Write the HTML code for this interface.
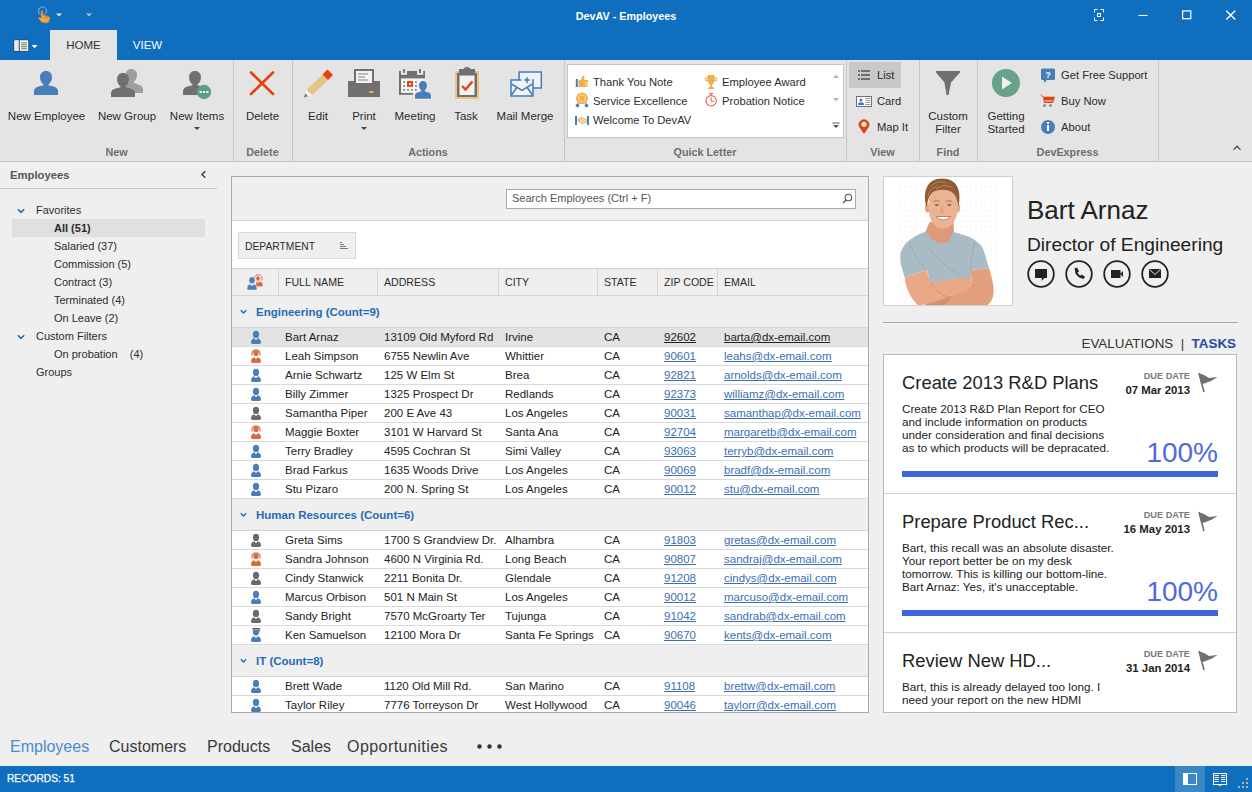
<!DOCTYPE html>
<html><head><meta charset="utf-8">
<style>
*{margin:0;padding:0;box-sizing:border-box}
html,body{width:1252px;height:792px;overflow:hidden;background:#efefef;font-family:"Liberation Sans",sans-serif;color:#222;position:relative}
.a{position:absolute;white-space:nowrap}
#title{left:0;top:0;width:1252px;height:60px;background:#106ebe}
#ribbon{left:0;top:60px;width:1252px;height:102px;background:#e4e4e4;border-bottom:1px solid #c6c6c6}
.sep{position:absolute;top:0;width:1px;height:101px;background:#c6c6c6}
.rb{font-size:11.5px;color:#2c2c2c;text-align:center}
.gl{font-size:10.8px;color:#6e6e6e;font-weight:bold;text-align:center;top:85.5px}
.sm{font-size:11.2px;color:#2c2c2c}
.nav{font-size:11px;color:#2c2c2c}
.hd{font-size:11px;color:#2c2c2c}
.cell{font-size:11.5px;color:#222}
.lnk{color:#3a6fb0;text-decoration:underline}
.grp{font-size:11.5px;color:#1f6cb5;font-weight:bold}
.srch{font-size:11px;color:#555}
.sel{color:#222}
.hl{position:absolute;height:1px;background:#d5d5d5}
.vl{position:absolute;width:1px;background:#d5d5d5}
</style></head><body>

<!-- TITLE BAR + TABS -->
<div id="title" class="a">
  <div class="a" style="left:0;width:1252px;text-align:center;top:10px;font-size:10.8px;font-weight:bold;color:#fff">DevAV - Employees</div>
  <div class="a" style="left:50px;top:30px;width:67px;height:30px;background:#e4e4e4"></div>
  <div class="a" style="left:50px;top:39px;width:67px;text-align:center;font-size:11.5px;color:#333">HOME</div>
  <div class="a" style="left:117px;top:39px;width:61px;text-align:center;font-size:11.5px;color:#fff">VIEW</div>
</div>

<!-- RIBBON -->
<div id="ribbon" class="a">
  <div class="sep" style="left:233px"></div>
  <div class="sep" style="left:292px"></div>
  <div class="sep" style="left:564px"></div>
  <div class="sep" style="left:846px"></div>
  <div class="sep" style="left:919px"></div>
  <div class="sep" style="left:977px"></div>
  <div class="sep" style="left:1158px"></div>

  <div class="a rb" style="left:0;width:93px;top:50px">New Employee</div>
  <div class="a rb" style="left:93px;width:68px;top:50px">New Group</div>
  <div class="a rb" style="left:161px;width:72px;top:50px">New Items</div>
  <div class="a rb" style="left:233px;width:59px;top:50px">Delete</div>
  <div class="a rb" style="left:292px;width:52px;top:50px">Edit</div>
  <div class="a rb" style="left:344px;width:40px;top:50px">Print</div>
  <div class="a rb" style="left:384px;width:62px;top:50px">Meeting</div>
  <div class="a rb" style="left:446px;width:40px;top:50px">Task</div>
  <div class="a rb" style="left:486px;width:78px;top:50px">Mail Merge</div>

  <div class="a gl" style="left:0;width:233px">New</div>
  <div class="a gl" style="left:233px;width:59px">Delete</div>
  <div class="a gl" style="left:292px;width:272px">Actions</div>
  <div class="a gl" style="left:564px;width:282px">Quick Letter</div>
  <div class="a gl" style="left:846px;width:73px">View</div>
  <div class="a gl" style="left:919px;width:58px">Find</div>
  <div class="a gl" style="left:977px;width:181px">DevExpress</div>

  <!-- gallery -->
  <div class="a" style="left:567px;top:4px;width:277px;height:74px;background:#fff;border:1px solid #c6c6c6"></div>
  <div class="a sm" style="left:593px;top:16px">Thank You Note</div>
  <div class="a sm" style="left:593px;top:35px">Service Excellence</div>
  <div class="a sm" style="left:593px;top:54px">Welcome To DevAV</div>
  <div class="a sm" style="left:722px;top:16px">Employee Award</div>
  <div class="a sm" style="left:722px;top:35px">Probation Notice</div>

  <!-- view -->
  <div class="a" style="left:849px;top:2px;width:52px;height:26px;background:#c8c8c8"></div>
  <div class="a sm" style="left:877px;top:9px">List</div>
  <div class="a sm" style="left:877px;top:35px">Card</div>
  <div class="a sm" style="left:877px;top:61px">Map It</div>

  <div class="a rb" style="left:919px;width:58px;top:50px;line-height:13px">Custom<br>Filter</div>
  <div class="a rb" style="left:977px;width:58px;top:50px;line-height:13px">Getting<br>Started</div>
  <div class="a sm" style="left:1061px;top:9px">Get Free Support</div>
  <div class="a sm" style="left:1061px;top:35px">Buy Now</div>
  <div class="a sm" style="left:1061px;top:61px">About</div>
</div>

<!-- LEFT NAV -->
<div class="a" style="left:10px;top:169px;font-size:11.3px;color:#555;font-weight:bold">Employees</div>
<div class="a" style="left:0;top:188px;width:217px;height:1px;background:#c8c8c8"></div>
<div class="a" style="left:12px;top:219px;width:193px;height:18px;background:#e0e0e0"></div>
<div class="a nav" style="left:36px;top:204px">Favorites</div>
<div class="a nav" style="left:54px;top:222px;font-weight:bold">All (51)</div>
<div class="a nav" style="left:54px;top:240px">Salaried (37)</div>
<div class="a nav" style="left:54px;top:258px">Commission (5)</div>
<div class="a nav" style="left:54px;top:276px">Contract (3)</div>
<div class="a nav" style="left:54px;top:294px">Terminated (4)</div>
<div class="a nav" style="left:54px;top:312px">On Leave (2)</div>
<div class="a nav" style="left:36px;top:330px">Custom Filters</div>
<div class="a nav" style="left:54px;top:348px">On probation&nbsp;&nbsp;&nbsp; (4)</div>
<div class="a nav" style="left:36px;top:366px">Groups</div>
<svg class="a" style="left:0;top:160px" width="230" height="230" viewBox="0 160 230 230">
 <path d="M205.3,171.2 L202,174.5 L205.3,177.8" fill="none" stroke="#444" stroke-width="1.6"/>
 <path d="M17.8,209.2 L21,212.4 L24.2,209.2" fill="none" stroke="#1f6cb5" stroke-width="1.6"/>
 <path d="M17.8,335.2 L21,338.4 L24.2,335.2" fill="none" stroke="#1f6cb5" stroke-width="1.6"/>
</svg>

<!-- GRID -->
<div id="grid" class="a" style="left:231px;top:176px;width:638px;height:537px;background:#fff;border:1px solid #a9a9a9;overflow:hidden">
<!--GH-->
<div class="a" style="left:0px;top:0px;width:636px;height:44px;background:#efefef;border-bottom:1px solid #d4d4d4"></div>
<div class="a" style="left:274px;top:12px;width:350px;height:20px;background:#fff;border:1px solid #ababab"></div>
<div class="a srch" style="left:280px;top:15px">Search Employees (Ctrl + F)</div>
<div class="a" style="left:6px;top:55px;width:118px;height:27px;background:#efefef;border:1px solid #d8d8d8"></div>
<div class="a hd" style="left:13px;top:64px;font-size:10.3px">DEPARTMENT</div>
<div class="a" style="left:0px;top:91px;width:636px;height:28px;background:#efefef;border-top:1px solid #d4d4d4;border-bottom:1px solid #d4d4d4"></div>
<div class="a" style="left:46px;top:92px;width:1px;height:26px;background:#d4d4d4"></div>
<div class="a" style="left:145px;top:92px;width:1px;height:26px;background:#d4d4d4"></div>
<div class="a" style="left:266px;top:92px;width:1px;height:26px;background:#d4d4d4"></div>
<div class="a" style="left:365px;top:92px;width:1px;height:26px;background:#d4d4d4"></div>
<div class="a" style="left:425px;top:92px;width:1px;height:26px;background:#d4d4d4"></div>
<div class="a" style="left:485px;top:92px;width:1px;height:26px;background:#d4d4d4"></div>
<div class="a hd" style="left:53px;top:99px;font-size:10.6px">FULL NAME</div>
<div class="a hd" style="left:152px;top:99px;font-size:10.6px">ADDRESS</div>
<div class="a hd" style="left:273px;top:99px;font-size:10.6px">CITY</div>
<div class="a hd" style="left:372px;top:99px;font-size:10.6px">STATE</div>
<div class="a hd" style="left:432px;top:99px;font-size:10.6px">ZIP CODE</div>
<div class="a hd" style="left:492px;top:99px;font-size:10.6px">EMAIL</div>
<div class="a" style="left:0px;top:119px;width:636px;height:32px;background:#efefef;border-bottom:1px solid #d4d4d4"></div>
<div class="a grp" style="left:24px;top:129px">Engineering (Count=9)</div>
<div class="a" style="left:0px;top:151px;width:636px;height:19px;background:#e3e3e3;border-bottom:1px solid #dadada"></div>
<div class="a cell" style="left:53px;top:154px">Bart Arnaz</div>
<div class="a cell" style="left:152px;top:154px">13109 Old Myford Rd</div>
<div class="a cell" style="left:273px;top:154px">Irvine</div>
<div class="a cell" style="left:372px;top:154px">CA</div>
<div class="a cell lnk sel" style="left:432px;top:154px">92602</div>
<div class="a cell lnk sel" style="left:492px;top:154px">barta@dx-email.com</div>
<div class="a" style="left:0px;top:170px;width:636px;height:19px;background:#fff;border-bottom:1px solid #dadada"></div>
<div class="a cell" style="left:53px;top:173px">Leah Simpson</div>
<div class="a cell" style="left:152px;top:173px">6755 Newlin Ave</div>
<div class="a cell" style="left:273px;top:173px">Whittier</div>
<div class="a cell" style="left:372px;top:173px">CA</div>
<div class="a cell lnk" style="left:432px;top:173px">90601</div>
<div class="a cell lnk" style="left:492px;top:173px">leahs@dx-email.com</div>
<div class="a" style="left:0px;top:189px;width:636px;height:19px;background:#fff;border-bottom:1px solid #dadada"></div>
<div class="a cell" style="left:53px;top:192px">Arnie Schwartz</div>
<div class="a cell" style="left:152px;top:192px">125 W Elm St</div>
<div class="a cell" style="left:273px;top:192px">Brea</div>
<div class="a cell" style="left:372px;top:192px">CA</div>
<div class="a cell lnk" style="left:432px;top:192px">92821</div>
<div class="a cell lnk" style="left:492px;top:192px">arnolds@dx-email.com</div>
<div class="a" style="left:0px;top:208px;width:636px;height:19px;background:#fff;border-bottom:1px solid #dadada"></div>
<div class="a cell" style="left:53px;top:211px">Billy Zimmer</div>
<div class="a cell" style="left:152px;top:211px">1325 Prospect Dr</div>
<div class="a cell" style="left:273px;top:211px">Redlands</div>
<div class="a cell" style="left:372px;top:211px">CA</div>
<div class="a cell lnk" style="left:432px;top:211px">92373</div>
<div class="a cell lnk" style="left:492px;top:211px">williamz@dx-email.com</div>
<div class="a" style="left:0px;top:227px;width:636px;height:19px;background:#fff;border-bottom:1px solid #dadada"></div>
<div class="a cell" style="left:53px;top:230px">Samantha Piper</div>
<div class="a cell" style="left:152px;top:230px">200 E Ave 43</div>
<div class="a cell" style="left:273px;top:230px">Los Angeles</div>
<div class="a cell" style="left:372px;top:230px">CA</div>
<div class="a cell lnk" style="left:432px;top:230px">90031</div>
<div class="a cell lnk" style="left:492px;top:230px">samanthap@dx-email.com</div>
<div class="a" style="left:0px;top:246px;width:636px;height:19px;background:#fff;border-bottom:1px solid #dadada"></div>
<div class="a cell" style="left:53px;top:249px">Maggie Boxter</div>
<div class="a cell" style="left:152px;top:249px">3101 W Harvard St</div>
<div class="a cell" style="left:273px;top:249px">Santa Ana</div>
<div class="a cell" style="left:372px;top:249px">CA</div>
<div class="a cell lnk" style="left:432px;top:249px">92704</div>
<div class="a cell lnk" style="left:492px;top:249px">margaretb@dx-email.com</div>
<div class="a" style="left:0px;top:265px;width:636px;height:19px;background:#fff;border-bottom:1px solid #dadada"></div>
<div class="a cell" style="left:53px;top:268px">Terry Bradley</div>
<div class="a cell" style="left:152px;top:268px">4595 Cochran St</div>
<div class="a cell" style="left:273px;top:268px">Simi Valley</div>
<div class="a cell" style="left:372px;top:268px">CA</div>
<div class="a cell lnk" style="left:432px;top:268px">93063</div>
<div class="a cell lnk" style="left:492px;top:268px">terryb@dx-email.com</div>
<div class="a" style="left:0px;top:284px;width:636px;height:19px;background:#fff;border-bottom:1px solid #dadada"></div>
<div class="a cell" style="left:53px;top:287px">Brad Farkus</div>
<div class="a cell" style="left:152px;top:287px">1635 Woods Drive</div>
<div class="a cell" style="left:273px;top:287px">Los Angeles</div>
<div class="a cell" style="left:372px;top:287px">CA</div>
<div class="a cell lnk" style="left:432px;top:287px">90069</div>
<div class="a cell lnk" style="left:492px;top:287px">bradf@dx-email.com</div>
<div class="a" style="left:0px;top:303px;width:636px;height:19px;background:#fff;border-bottom:1px solid #dadada"></div>
<div class="a cell" style="left:53px;top:306px">Stu Pizaro</div>
<div class="a cell" style="left:152px;top:306px">200 N. Spring St</div>
<div class="a cell" style="left:273px;top:306px">Los Angeles</div>
<div class="a cell" style="left:372px;top:306px">CA</div>
<div class="a cell lnk" style="left:432px;top:306px">90012</div>
<div class="a cell lnk" style="left:492px;top:306px">stu@dx-email.com</div>
<div class="a" style="left:0px;top:322px;width:636px;height:32px;background:#efefef;border-bottom:1px solid #d4d4d4"></div>
<div class="a grp" style="left:24px;top:332px">Human Resources (Count=6)</div>
<div class="a" style="left:0px;top:354px;width:636px;height:19px;background:#fff;border-bottom:1px solid #dadada"></div>
<div class="a cell" style="left:53px;top:357px">Greta Sims</div>
<div class="a cell" style="left:152px;top:357px">1700 S Grandview Dr.</div>
<div class="a cell" style="left:273px;top:357px">Alhambra</div>
<div class="a cell" style="left:372px;top:357px">CA</div>
<div class="a cell lnk" style="left:432px;top:357px">91803</div>
<div class="a cell lnk" style="left:492px;top:357px">gretas@dx-email.com</div>
<div class="a" style="left:0px;top:373px;width:636px;height:19px;background:#fff;border-bottom:1px solid #dadada"></div>
<div class="a cell" style="left:53px;top:376px">Sandra Johnson</div>
<div class="a cell" style="left:152px;top:376px">4600 N Virginia Rd.</div>
<div class="a cell" style="left:273px;top:376px">Long Beach</div>
<div class="a cell" style="left:372px;top:376px">CA</div>
<div class="a cell lnk" style="left:432px;top:376px">90807</div>
<div class="a cell lnk" style="left:492px;top:376px">sandraj@dx-email.com</div>
<div class="a" style="left:0px;top:392px;width:636px;height:19px;background:#fff;border-bottom:1px solid #dadada"></div>
<div class="a cell" style="left:53px;top:395px">Cindy Stanwick</div>
<div class="a cell" style="left:152px;top:395px">2211 Bonita Dr.</div>
<div class="a cell" style="left:273px;top:395px">Glendale</div>
<div class="a cell" style="left:372px;top:395px">CA</div>
<div class="a cell lnk" style="left:432px;top:395px">91208</div>
<div class="a cell lnk" style="left:492px;top:395px">cindys@dx-email.com</div>
<div class="a" style="left:0px;top:411px;width:636px;height:19px;background:#fff;border-bottom:1px solid #dadada"></div>
<div class="a cell" style="left:53px;top:414px">Marcus Orbison</div>
<div class="a cell" style="left:152px;top:414px">501 N Main St</div>
<div class="a cell" style="left:273px;top:414px">Los Angeles</div>
<div class="a cell" style="left:372px;top:414px">CA</div>
<div class="a cell lnk" style="left:432px;top:414px">90012</div>
<div class="a cell lnk" style="left:492px;top:414px">marcuso@dx-email.com</div>
<div class="a" style="left:0px;top:430px;width:636px;height:19px;background:#fff;border-bottom:1px solid #dadada"></div>
<div class="a cell" style="left:53px;top:433px">Sandy Bright</div>
<div class="a cell" style="left:152px;top:433px">7570 McGroarty Ter</div>
<div class="a cell" style="left:273px;top:433px">Tujunga</div>
<div class="a cell" style="left:372px;top:433px">CA</div>
<div class="a cell lnk" style="left:432px;top:433px">91042</div>
<div class="a cell lnk" style="left:492px;top:433px">sandrab@dx-email.com</div>
<div class="a" style="left:0px;top:449px;width:636px;height:19px;background:#fff;border-bottom:1px solid #dadada"></div>
<div class="a cell" style="left:53px;top:452px">Ken Samuelson</div>
<div class="a cell" style="left:152px;top:452px">12100 Mora Dr</div>
<div class="a cell" style="left:273px;top:452px">Santa Fe Springs</div>
<div class="a cell" style="left:372px;top:452px">CA</div>
<div class="a cell lnk" style="left:432px;top:452px">90670</div>
<div class="a cell lnk" style="left:492px;top:452px">kents@dx-email.com</div>
<div class="a" style="left:0px;top:468px;width:636px;height:32px;background:#efefef;border-bottom:1px solid #d4d4d4"></div>
<div class="a grp" style="left:24px;top:478px">IT (Count=8)</div>
<div class="a" style="left:0px;top:500px;width:636px;height:19px;background:#fff;border-bottom:1px solid #dadada"></div>
<div class="a cell" style="left:53px;top:503px">Brett Wade</div>
<div class="a cell" style="left:152px;top:503px">1120 Old Mill Rd.</div>
<div class="a cell" style="left:273px;top:503px">San Marino</div>
<div class="a cell" style="left:372px;top:503px">CA</div>
<div class="a cell lnk" style="left:432px;top:503px">91108</div>
<div class="a cell lnk" style="left:492px;top:503px">brettw@dx-email.com</div>
<div class="a" style="left:0px;top:519px;width:636px;height:19px;background:#fff;border-bottom:1px solid #dadada"></div>
<div class="a cell" style="left:53px;top:522px">Taylor Riley</div>
<div class="a cell" style="left:152px;top:522px">7776 Torreyson Dr</div>
<div class="a cell" style="left:273px;top:522px">West Hollywood</div>
<div class="a cell" style="left:372px;top:522px">CA</div>
<div class="a cell lnk" style="left:432px;top:522px">90046</div>
<div class="a cell lnk" style="left:492px;top:522px">taylorr@dx-email.com</div>
<!--/GH-->
<svg class="a" style="left:0;top:0" width="636" height="535" viewBox="232 177 636 535">
<defs>
 <g id="p_blue" fill="#4a7eb8"><ellipse cx="256" cy="334.4" rx="3.1" ry="3.6"/><path d="M251,342.3 C251,340 252.5,338.8 254,338.2 L256,339.9 L258,338.2 C259.5,338.8 261,340 261,342.3 C261,343.5 260.4,344 259.3,344 L252.7,344 C251.6,344 251,343.5 251,342.3 Z"/></g>
 <g id="p_gray" fill="#6a6a6a"><ellipse cx="256" cy="334.4" rx="3.1" ry="3.6"/><path d="M251,342.3 C251,340 252.5,338.8 254,338.2 L256,339.9 L258,338.2 C259.5,338.8 261,340 261,342.3 C261,343.5 260.4,344 259.3,344 L252.7,344 C251.6,344 251,343.5 251,342.3 Z"/></g>
 <g id="p_grad" fill="#4a7eb8"><rect x="252.5" y="330" width="7" height="1.5" fill="#555"/><path d="M259.6,330.5 v3" stroke="#555" stroke-width="0.8"/><path d="M253,332 L259,332 L259,334.5 C259,336.6 257.6,337.6 256,337.6 C254.4,337.6 253,336.6 253,334.5 Z"/><path d="M251,342.3 C251,340 252.5,338.8 254,338.2 L256,339.9 L258,338.2 C259.5,338.8 261,340 261,342.3 C261,343.5 260.4,344 259.3,344 L252.7,344 C251.6,344 251,343.5 251,342.3 Z"/></g>
 <g id="p_red" fill="#e0663f"><ellipse cx="256" cy="334.2" rx="2.6" ry="2.9"/><path d="M252.3,336.6 A4.1,4.1 0 1 1 259.7,336.6" fill="none" stroke="#e0663f" stroke-width="1.1"/><path d="M251,342.3 C251,340 252.5,338.8 254,338.2 L256,339.9 L258,338.2 C259.5,338.8 261,340 261,342.3 C261,343.5 260.4,344 259.3,344 L252.7,344 C251.6,344 251,343.5 251,342.3 Z"/></g>
</defs>
 <!-- header icon -->
 <g fill="#e0663f" stroke="#f0f0f0" stroke-width="0.5"><ellipse cx="258" cy="278.4" rx="2.2" ry="2.5"/><path d="M254.6,280.6 A4,4 0 1 1 261.6,280.6" fill="none" stroke="#e0663f" stroke-width="1"/><path d="M256,286.7 L256,283.5 C256,282.3 256.8,281.6 257,281.3 L258.5,282.5 L260,281.3 C261.5,281.8 263,283 263,285 C263,286 262.5,286.7 261.5,286.7 Z"/></g>
 <g fill="#4a7eb8" stroke="#f0f0f0" stroke-width="0.6"><ellipse cx="252" cy="280.2" rx="3.1" ry="3.5"/><path d="M247,288.6 C247,286 248.5,284.6 250,284 L252,285.8 L254,284 C255.5,284.6 257,286 257,288.6 C257,289.6 256.4,290 255.5,290 L248.5,290 C247.6,290 247,289.6 247,288.6 Z"/></g>
 <!-- sort glyph in dept -->
 <path d="M340,242.5 h2 M340,244.5 h4 M340,246.5 h6 M340,248.5 h8" stroke="#6a6a6a" stroke-width="0.9"/>
 <!-- search glyph -->
 <circle cx="848.4" cy="197.5" r="3.3" fill="none" stroke="#555" stroke-width="1.1"/><path d="M846,200 L843,203" stroke="#555" stroke-width="1.3"/>
<!--GS-->
<path d="M240.8,310.2 L243.5,312.9 L246.2,310.2" fill="none" stroke="#1f6cb5" stroke-width="1.4"/>
<use href="#p_blue" x="0" y="0"/>
<use href="#p_red" x="0" y="19"/>
<use href="#p_blue" x="0" y="38"/>
<use href="#p_blue" x="0" y="57"/>
<use href="#p_gray" x="0" y="76"/>
<use href="#p_red" x="0" y="95"/>
<use href="#p_blue" x="0" y="114"/>
<use href="#p_blue" x="0" y="133"/>
<use href="#p_blue" x="0" y="152"/>
<path d="M240.8,513.2 L243.5,515.9 L246.2,513.2" fill="none" stroke="#1f6cb5" stroke-width="1.4"/>
<use href="#p_gray" x="0" y="203"/>
<use href="#p_red" x="0" y="222"/>
<use href="#p_gray" x="0" y="241"/>
<use href="#p_blue" x="0" y="260"/>
<use href="#p_gray" x="0" y="279"/>
<use href="#p_grad" x="0" y="298"/>
<path d="M240.8,659.2 L243.5,661.9 L246.2,659.2" fill="none" stroke="#1f6cb5" stroke-width="1.4"/>
<use href="#p_blue" x="0" y="349"/>
<use href="#p_blue" x="0" y="368"/>
<!--/GS-->
</svg>
</div>

<!-- DETAIL -->
<div class="a" style="left:883px;top:176px;width:130px;height:130px;background:#fff;border:1px solid #cfcfcf"></div>
<svg class="a" style="left:884px;top:177px" width="128" height="128" viewBox="884 177 128 128">
 <defs><pattern id="dots" width="5" height="5" patternUnits="userSpaceOnUse"><circle cx="1" cy="1" r="0.6" fill="#e4e4e4"/></pattern></defs>
 <rect x="898" y="182" width="100" height="120" fill="url(#dots)"/>
 <!-- neck -->
 <path d="M929.5,222 L953.5,222 L954,233 C951,241 948,244 942.3,244 C937,244 932,241 925,233 Z" fill="#dc9a78"/>
 <!-- shirt -->
 <path d="M926,231.5 C931,240 937,243.3 942.3,243.3 C948,243.3 951,240 952.8,232 C962,234 971,237 975.5,240.4 C981,244 984,249 985,254.6 L989,268 L970.8,270 L972,288 L931,290 L927.2,270 L904.5,277 L901,265 C900,258 900,253 901,251.8 C903,246 906,242 909.2,240.4 C915,236 921,233 926,231.5 Z" fill="#a9bcc5"/>
 <path d="M909,241 C913,252 918,262 927,270 M975,241 C972,252 971,262 970.8,270 M930,250 C940,262 950,270 962,276" fill="none" stroke="#94a9b3" stroke-width="0.9"/>
 <path d="M935,286 L975,280 L990,296 L988,305 L925,305 Z" fill="#d48f6c"/>
 <!-- right arm (under) -->
 <path d="M970.8,270 L989,268 C992,278 995,288 993,296 C992,301 990,303 987,305 L945,305 C948,300 952,296 955,294 L975,286 C972,280 970,275 970.8,270 Z" fill="#e2a07c"/>
 <!-- left arm (over) -->
 <path d="M904.5,277 L927.2,270 C928,276 929,280 931,283 C945,280 958,278 967,278 C972,279 975,281 973,285 C970,289 962,292 956.6,294.4 C945,298 935,302 926,304 L922,305 L918,305 C912,300 906,290 904.5,277 Z" fill="#e9a986"/>
 <path d="M931,283 C935,290 940,294 948,297" fill="none" stroke="#d08c69" stroke-width="0.8"/>
 <!-- head -->
 <ellipse cx="927.5" cy="208" rx="2.5" ry="4.5" fill="#e3a481"/><ellipse cx="957.5" cy="208" rx="2.5" ry="4.5" fill="#e3a481"/>
 <path d="M928.5,205 C928.5,192 934,186 943,186 C952,186 958,192 958,205 C958,218 952,228.5 942.5,228.5 C933,228.5 928.5,218 928.5,205 Z" fill="#ecb393"/>
 <path d="M926.5,207 C922,192 927,178.5 942,178.5 C957,178.5 962,190 958.5,207 C957.5,199 955,193 950,191 C944,189 938,189.5 933,192 C929,195 928,200 926.5,207 Z" fill="#8f5c36"/>
 <path d="M931,186 C935,182 941,181 946,183 M936,189 C941,185 948,185 953,188 M928,196 C930,190 933,187 937,186" fill="none" stroke="#b98356" stroke-width="1"/>
 <path d="M933.5,201.5 C935.5,200.5 938,200.5 940,201.5 M945.5,201.5 C947.5,200.5 950,200.5 952,201.5" fill="none" stroke="#a0704c" stroke-width="0.9"/>
 <path d="M942.5,206 L941.5,212 L944,212.5" fill="none" stroke="#d89474" stroke-width="0.9"/>
 <ellipse cx="936.8" cy="205" rx="2" ry="1.1" fill="#6a7078"/><ellipse cx="949.4" cy="205" rx="2" ry="1.1" fill="#6a7078"/>
 <path d="M936.5,216.5 C939,221 947,221 950.5,216.5 Z" fill="#fff" stroke="#b86a55" stroke-width="0.8"/>
</svg>
<div class="a" style="left:1027px;top:195px;font-size:26px;color:#222">Bart Arnaz</div>
<div class="a" style="left:1027px;top:234px;font-size:19.2px;color:#222">Director of Engineering</div>
<svg class="a" style="left:1020px;top:255px" width="160" height="40" viewBox="1020 255 160 40">
 <g fill="none" stroke="#222" stroke-width="1.8">
  <circle cx="1041" cy="274" r="12.8"/><circle cx="1079" cy="274" r="12.8"/><circle cx="1117" cy="274" r="12.8"/><circle cx="1155" cy="274" r="12.8"/>
 </g>
 <path d="M1035,269 h12 v9 h-2.5 l-3,3 l0.3,-3 h-6.8 Z" fill="#222"/>
 <path d="M1076,269.5 C1075.6,273.8 1079,277.6 1083.4,277.3" fill="none" stroke="#222" stroke-width="2.2"/><path d="M1074.3,268.6 L1077,267.6 L1079.2,271.6 L1076.8,272.6 Z M1079.6,276.4 L1081.4,274.6 L1085,276.8 L1083.6,279 Z" fill="#222"/>
 <rect x="1111" y="270" width="9.5" height="8" fill="#222"/><path d="M1120,274 L1123,271 L1123,277 Z" fill="#222"/>
 <rect x="1149" y="269" width="12" height="9" fill="#222"/><path d="M1149.5,269.5 L1155,274.5 L1160.5,269.5" fill="none" stroke="#f0f0f0" stroke-width="0.9"/>
</svg>
<div class="a" style="left:883px;top:322px;width:355px;height:1px;background:#a9a9a9"></div>
<div class="a" style="left:1000px;top:336px;width:236px;text-align:right;font-size:13.4px;color:#333">EVALUATIONS&nbsp; |&nbsp; <b style="color:#2748a2">TASKS</b></div>

<div class="a" style="left:883px;top:354px;width:354px;height:359px;background:#fff;border:1px solid #b8b8b8;overflow:hidden">
</div>
<div class="a" style="left:884px;top:493px;width:352px;height:1px;background:#d0d0d0"></div>
<div class="a" style="left:884px;top:632px;width:352px;height:1px;background:#d0d0d0"></div>
<div class="a" style="left:902px;top:372px;font-size:18.4px;color:#222">Create 2013 R&amp;D Plans</div>
<div class="a" style="left:1090px;top:371px;width:100px;text-align:right;font-size:9.2px;font-weight:bold;color:#7a7a7a">DUE DATE</div>
<div class="a" style="left:1070px;top:384px;width:120px;text-align:right;font-size:11.4px;font-weight:bold;color:#222">07 Mar 2013</div>
<div class="a" style="left:902px;top:402px;font-size:11.7px;color:#222">Create 2013 R&amp;D Plan Report for CEO</div>
<div class="a" style="left:902px;top:415px;font-size:11.7px;color:#222">and include information on products</div>
<div class="a" style="left:902px;top:428px;font-size:11.7px;color:#222">under consideration and final decisions</div>
<div class="a" style="left:902px;top:441px;font-size:11.7px;color:#222">as to which products will be depracated.</div>
<div class="a" style="left:1098px;top:437px;width:120px;text-align:right;font-size:28px;color:#4d6ade">100%</div>
<div class="a" style="left:902px;top:471px;width:316px;height:6px;background:#3f65dd"></div>
<div class="a" style="left:902px;top:511px;font-size:18.4px;color:#222">Prepare Product Rec...</div>
<div class="a" style="left:1090px;top:510px;width:100px;text-align:right;font-size:9.2px;font-weight:bold;color:#7a7a7a">DUE DATE</div>
<div class="a" style="left:1070px;top:523px;width:120px;text-align:right;font-size:11.4px;font-weight:bold;color:#222">16 May 2013</div>
<div class="a" style="left:902px;top:541px;font-size:11.7px;color:#222">Bart, this recall was an absolute disaster.</div>
<div class="a" style="left:902px;top:554px;font-size:11.7px;color:#222">Your report better be on my desk</div>
<div class="a" style="left:902px;top:567px;font-size:11.7px;color:#222">tomorrow. This is killing our bottom-line.</div>
<div class="a" style="left:902px;top:580px;font-size:11.7px;color:#222">Bart Arnaz: Yes, it's unacceptable.</div>
<div class="a" style="left:1098px;top:576px;width:120px;text-align:right;font-size:28px;color:#4d6ade">100%</div>
<div class="a" style="left:902px;top:610px;width:316px;height:6px;background:#3f65dd"></div>
<div class="a" style="left:902px;top:650px;font-size:18.4px;color:#222">Review New HD...</div>
<div class="a" style="left:1090px;top:649px;width:100px;text-align:right;font-size:9.2px;font-weight:bold;color:#7a7a7a">DUE DATE</div>
<div class="a" style="left:1070px;top:662px;width:120px;text-align:right;font-size:11.4px;font-weight:bold;color:#222">31 Jan 2014</div>
<div class="a" style="left:902px;top:680px;font-size:11.7px;color:#222">Bart, this is already delayed too long. I</div>
<div class="a" style="left:902px;top:693px;font-size:11.7px;color:#222">need your report on the new HDMI</div>
<svg class="a" style="left:1190px;top:354px" width="40" height="360" viewBox="1190 354 40 360"><path d="M1199,373 L1204,392" stroke="#707070" stroke-width="1.6"/><path d="M1199,373.3 L1204,375.0 L1209,378.0 L1217.5,377.0 L1212,380.5 L1204.5,383.5 L1201,384.0 Z" fill="#707070"/><path d="M1199,512 L1204,531" stroke="#707070" stroke-width="1.6"/><path d="M1199,512.3 L1204,514.0 L1209,517.0 L1217.5,516.0 L1212,519.5 L1204.5,522.5 L1201,523.0 Z" fill="#707070"/><path d="M1199,651 L1204,670" stroke="#707070" stroke-width="1.6"/><path d="M1199,651.3 L1204,653.0 L1209,656.0 L1217.5,655.0 L1212,658.5 L1204.5,661.5 L1201,662.0 Z" fill="#707070"/></svg>
<!-- BOTTOM NAV -->
<div class="a" style="left:10px;top:738px;font-size:16px;color:#4a8ccc">Employees</div>
<div class="a" style="left:109px;top:738px;font-size:16px;color:#3a3a3a">Customers</div>
<div class="a" style="left:207px;top:738px;font-size:16px;color:#3a3a3a">Products</div>
<div class="a" style="left:291px;top:738px;font-size:16px;color:#3a3a3a">Sales</div>
<div class="a" style="left:347px;top:738px;font-size:16px;letter-spacing:0.45px;color:#3a3a3a">Opportunities</div>
<svg class="a" style="left:470px;top:738px" width="40" height="16" viewBox="470 738 40 16">
 <circle cx="479.5" cy="746.5" r="2.2" fill="#333"/><circle cx="489.5" cy="746.5" r="2.2" fill="#333"/><circle cx="499.5" cy="746.5" r="2.2" fill="#333"/>
</svg>

<!-- STATUS -->
<div class="a" style="left:0;top:766px;width:1252px;height:26px;background:#106ebe"></div>
<div class="a" style="left:7px;top:773px;font-size:10.2px;color:#fff;-webkit-text-stroke:0.25px #fff">RECORDS: 51</div>
<div class="a" style="left:1175px;top:766px;width:30px;height:26px;background:#3a87c8"></div>
<svg class="a" style="left:1170px;top:766px" width="82" height="26" viewBox="1170 766 82 26">
 <rect x="1183" y="773" width="14" height="12" fill="#fff"/>
 <rect x="1188" y="774" width="8" height="10" fill="#3a87c8"/>
 <rect x="1213.5" y="773.5" width="13" height="11" fill="none" stroke="#fff" stroke-width="1"/>
 <g fill="#fff"><rect x="1214.5" y="775" width="4.3" height="1"/><rect x="1214.5" y="777" width="4.3" height="1"/><rect x="1214.5" y="779" width="4.3" height="1"/><rect x="1214.5" y="781" width="4.3" height="1"/>
 <rect x="1221" y="775" width="4.3" height="1"/><rect x="1221" y="777" width="4.3" height="1"/><rect x="1221" y="779" width="4.3" height="1"/><rect x="1221" y="781" width="4.3" height="1"/>
 <path d="M1218.5,773 L1220,774.5 L1221.5,773 Z M1218.5,785 L1220,786.3 L1221.5,785 Z"/></g>
 <g fill="#b8b2a6"><rect x="1246" y="778" width="2" height="2"/><rect x="1242" y="782" width="2" height="2"/><rect x="1246" y="782" width="2" height="2"/><rect x="1238" y="786" width="2" height="2"/><rect x="1242" y="786" width="2" height="2"/><rect x="1246" y="786" width="2" height="2"/></g>
</svg>

<!-- ICONS OVERLAY -->
<svg class="a" style="left:0;top:0" width="1252" height="792" viewBox="0 0 1252 792">
 <!-- title bar -->
 <g>
  <circle cx="42.5" cy="11" r="4" fill="none" stroke="#8fb6e0" stroke-width="1.2" opacity=".8"/>
  <path d="M41,11.5 C41,10 43,10 43,11.5 L43,15 L45,15.3 L47,15.8 L49,16.6 C49.8,17 50,18 49.8,19 L49,21.5 C48.5,22.5 47.5,23 46,23 L44,23 C42.5,23 41.5,22 40.5,21 L38.5,18.5 C38,17.8 38.8,16.8 39.6,17.2 L41,18 Z" fill="#eba553" stroke="#a8601a" stroke-width=".6"/><path d="M45,15.5 v3 M47,16 v3" stroke="#a8601a" stroke-width=".5"/>
  <path d="M56,13.5 L62,13.5 L59,16.5 Z" fill="#dbe7f5"/>
  <path d="M86,13.5 L92,13.5 L89,16.5 Z" fill="#a9c6e8"/>
  <!-- window buttons -->
  <g fill="none" stroke="#fff" stroke-width="1">
   <path d="M1094.5,12.5 v-3 h3 M1100.5,9.5 h3 v3 M1103.5,17.5 v3 h-3 M1097.5,20.5 h-3 v-3"/>
   <rect x="1097.5" y="13.5" width="3" height="3"/>
   <path d="M1138.5,15.5 h9" stroke-width="1.1"/>
   <rect x="1182.6" y="10.9" width="8.2" height="7.8" stroke-width="1.2"/>
   <path d="M1226.3,10.8 L1235.2,19.4 M1235.2,10.8 L1226.3,19.4" stroke-width="1.4"/>
  </g>
  <!-- app menu icon -->
  <rect x="13.8" y="39.8" width="15" height="11.6" rx="1.2" fill="#fff" stroke="#15365c" stroke-width="0.9"/>
  <rect x="14.6" y="40.6" width="4.2" height="10" fill="#e2e8ef"/>
  <path d="M19.3,40.2 v11" stroke="#15365c" stroke-width="0.9"/>
  <path d="M21,42.8 h6 M21,44.8 h6 M21,46.8 h6 M21,48.8 h6" stroke="#444" stroke-width="0.8"/>
  <path d="M31.6,45 L37.6,45 L34.6,48.2 Z" fill="#fff"/>
 </g>
 <!-- New Employee -->
 <g fill="#4a7eb8">
  <path d="M46,71 C42.3,71 40,73.6 40,77.3 C40,80.6 41.8,83.4 43.5,84.5 L43.5,85.3 L38.5,86.6 C35.5,87.4 34,89 34,91.5 L34,95 L58,95 L58,91.5 C58,89 56.5,87.4 53.5,86.6 L48.5,85.3 L48.5,84.5 C50.2,83.4 52,80.6 52,77.3 C52,73.6 49.7,71 46,71 Z"/>
 </g>
 <!-- New Group -->
 <path fill="#9e9e9e" d="M131.3,69 C127.8,69 125.6,71.5 125.6,75 C125.6,78.2 127.3,80.8 129,81.8 L129,82.6 L124,84 L124,93 L143,93 L143,89.5 C143,87 141.5,85.5 138.6,84.8 L133.6,82.6 L133.6,81.8 C135.3,80.8 137,78.2 137,75 C137,71.5 134.8,69 131.3,69 Z"/>
 <path fill="#707070" d="M123,73 C119.3,73 117,75.6 117,79.3 C117,82.6 118.8,85.4 120.5,86.5 L120.5,87.3 L115.5,88.6 C112.5,89.4 111,91 111,93.5 L111,97 L135,97 L135,93.5 C135,91 133.5,89.4 130.5,88.6 L125.5,87.3 L125.5,86.5 C127.2,85.4 129,82.6 129,79.3 C129,75.6 126.7,73 123,73 Z"/>
 <!-- New Items -->
 <path fill="#707070" d="M195,71 C191.3,71 189,73.6 189,77.3 C189,80.6 190.8,83.4 192.5,84.5 L192.5,85.3 L187.5,86.6 C184.5,87.4 183,89 183,91.5 L183,95 L207,95 L207,91.5 C207,89 205.5,87.4 202.5,86.6 L197.5,85.3 L197.5,84.5 C199.2,83.4 201,80.6 201,77.3 C201,73.6 198.7,71 195,71 Z"/>
 <circle cx="204" cy="92" r="7.2" fill="#5f9e86" stroke="#e4e4e4" stroke-width="0"/>
 <rect x="199.6" y="91" width="2" height="2" fill="#fff"/><rect x="203" y="91" width="2" height="2" fill="#fff"/><rect x="206.4" y="91" width="2" height="2" fill="#fff"/>
 <path d="M194,127 L200,127 L197,130 Z" fill="#444"/>
 <!-- Delete -->
 <path d="M251,72.5 L273,94 M273,72.5 L251,94" stroke="#e8400f" stroke-width="2.6" stroke-linecap="round"/>
 <!-- Edit pencil -->
 <path d="M306.5,90 L322.5,74.5 L328,80 L312,95.5 Z" fill="#e8c283"/>
 <path d="M322.5,74.5 L327.5,69.5 L333,75 L328,80 Z" fill="#e8400f"/>
 <path d="M306.5,90 L312,95.5 L304,97.5 Z" fill="#f4f4f4"/>
 <path d="M305.2,93.5 L308,96.3 L304,97.5 Z" fill="#707070"/>
 <!-- Print -->
 <rect x="348" y="81" width="32" height="16" fill="#707070"/>
 <rect x="354" y="69" width="20" height="12.5" fill="#707070"/>
 <rect x="356" y="71" width="16" height="12" fill="#f2f2f2"/>
 <path d="M358,74 h10 M358,77 h7 M358,80 h10" stroke="#a8a8a8" stroke-width="1.3"/>
 <rect x="369.5" y="91" width="4" height="2" fill="#f0b060"/>
 <path d="M361,127 L367,127 L364,130 Z" fill="#444"/>
 <!-- Meeting -->
 <rect x="399" y="71" width="26" height="7.6" fill="#707070"/>
 <rect x="399" y="71" width="2" height="23.7" fill="#707070"/>
 <rect x="399" y="92.8" width="14" height="1.9" fill="#707070"/>
 <rect x="401" y="78.6" width="24" height="14.2" fill="#f4f4f4"/>
 <rect x="401" y="71" width="6" height="3.8" fill="#e8e8e8"/><rect x="417" y="71" width="6.3" height="3.8" fill="#e8e8e8"/>
 <rect x="403.2" y="69" width="1.8" height="4" fill="#707070"/><rect x="419" y="69" width="2" height="4" fill="#707070"/>
 <g fill="#8a8a8a"><rect x="403.2" y="81.2" width="1.8" height="1.8"/><rect x="403.2" y="85" width="1.8" height="1.8"/><rect x="403.2" y="89" width="1.8" height="1.8"/><rect x="407.2" y="89" width="1.8" height="1.8"/><rect x="411" y="89" width="1.8" height="1.8"/><rect x="415" y="81.2" width="1.8" height="1.8"/><rect x="415" y="85" width="1.8" height="1.8"/><rect x="415" y="89" width="1.8" height="1.8"/></g>
 <rect x="407" y="81" width="6" height="5.8" fill="#e8400f"/><rect x="409" y="83" width="2" height="2" fill="#fff"/>
 <path fill="#f0f0f0" d="M423,80 C420,80 418.3,82.3 418.3,85.2 C418.3,87.6 419.4,89.7 420.6,90.6 L420.6,91.2 L417.5,92 C415,92.7 414,94 414,96 L414,99.8 L432,99.8 L432,96 C432,94 431,92.7 428.5,92 L425.4,91.2 L425.4,90.6 C426.6,89.7 427.7,87.6 427.7,85.2 C427.7,82.3 426,80 423,80 Z"/>
 <path fill="#4a7eb8" d="M423,81 C420.6,81 419,83 419,85.5 C419,87.6 420.1,89.5 421.2,90.3 L421.2,91.3 L418,92.2 C416,92.8 415,93.8 415,95.5 L415,98.8 L431,98.8 L431,95.5 C431,93.8 430,92.8 428,92.2 L424.8,91.3 L424.8,90.3 C425.9,89.5 427,87.6 427,85.5 C427,83 425.4,81 423,81 Z"/>
 <!-- Task -->
 <rect x="455" y="71" width="24" height="28" fill="#efc27f"/>
 <rect x="457" y="73" width="20" height="24" fill="#707070"/>
 <rect x="459.5" y="75.5" width="15" height="19.5" fill="#f2f2f2"/>
 <path d="M459,74.5 L459,69 L463.5,69 C464.5,67.5 465.5,67 467,67 C468.5,67 469.5,67.5 470.5,69 L475,69 L475,74.5 Z" fill="#707070"/>
 <path d="M462,86 L465.5,89.5 L472.5,81.5" fill="none" stroke="#e8400f" stroke-width="2.4"/>
 <!-- Mail merge -->
 <g fill="none" stroke="#3f7ec0" stroke-width="1.5">
  <rect x="519.1" y="72" width="22.2" height="16" fill="#f2f2f2"/>
  <rect x="511" y="80" width="22" height="16" fill="#f2f2f2"/>
  <path d="M511.5,84 L522,90.3 L532.5,84"/>
  <path d="M511.5,95 L517,87.3 M532.5,95 L527,87.3"/>
 </g>
 <rect x="521.5" y="78.5" width="10.5" height="2.5" fill="#f2f2f2"/>
 <path d="M527,77.3 v5.6 M524.2,80.1 h5.6" stroke="#3f7ec0" stroke-width="1.5"/>
 <!-- Quick letter icons -->
 <rect x="575.8" y="79" width="2" height="8" fill="#3f7ec0"/>
 <path d="M578.5,80 L580.8,80 L582.3,76.3 C582.8,75.3 584.6,75.5 584.5,77 L584.2,80 L587.2,80 C588.2,80 588.4,81 588.2,81.6 L587.6,86 C587.4,86.6 587,87 586.4,87 L578.5,87 Z" fill="#edb14a"/>
 <path d="M584.8,82.4 h3.6 M584.8,84.6 h3.4" stroke="#fff" stroke-width="0.7"/>
 <path d="M578.2,103 L577.5,105.5 M585.8,103 L586.5,105.5" stroke="#edb14a" stroke-width="1.6"/>
 <circle cx="582" cy="98.3" r="5.9" fill="#edb14a"/>
 <circle cx="582" cy="98.3" r="3.5" fill="none" stroke="#fbe6c4" stroke-width="0.9"/>
 <path d="M575.3,105.5 L577.5,103.3 L579.7,105.5 L577.5,107.7 Z M584.3,105.5 L586.5,103.3 L588.7,105.5 L586.5,107.7 Z" fill="#3f7ec0"/>
 <rect x="575" y="116" width="2" height="9" fill="#3f7ec0"/><rect x="587" y="116" width="2" height="9" fill="#3f7ec0"/>
 <path d="M577.5,118.5 L581,116.8 L583,117.5 L587,119.3 L587,122.3 L583.5,124.5 L582,124 L577.5,121.5 Z" fill="#f0c683"/>
 <path d="M580.5,119.5 L584.5,123.3 M582.5,118.3 L585.8,121.8" stroke="#fff" stroke-width="0.6"/>
 <path d="M707.6,75 L714.6,75 L714.6,80 C714.6,82.6 713.2,84 712,84.6 L712,87 L713.8,87.3 L714.4,89 L707.8,89 L708.4,87.3 L710.2,87 L710.2,84.6 C709,84 707.6,82.6 707.6,80 Z" fill="#edb14a"/><circle cx="706.7" cy="79.3" r="1.4" fill="none" stroke="#edb14a" stroke-width="1.1"/><circle cx="715.5" cy="79.3" r="1.4" fill="none" stroke="#edb14a" stroke-width="1.1"/>
 <circle cx="711.1" cy="100.8" r="5.2" fill="none" stroke="#e0694a" stroke-width="1.1"/>
 <rect x="709.2" y="93" width="3.8" height="1.2" fill="#e0694a"/><rect x="710.6" y="94" width="1" height="1.8" fill="#e0694a"/>
 <path d="M711.1,97 v4.3 h2.8" fill="none" stroke="#e0694a" stroke-width="1"/>
 <!-- gallery scroll arrows -->
 <path d="M833,78 L839,78 L836,74.5 Z" fill="#b8b8b8"/>
 <path d="M833,98 L839,98 L836,101.5 Z" fill="#b8b8b8"/>
 <rect x="832.5" y="122.5" width="7" height="1" fill="#555"/>
 <path d="M833,125 L839,125 L836,128 Z" fill="#555"/>
 <!-- View icons -->
 <g fill="#6e6e6e"><rect x="858" y="70" width="2" height="2"/><rect x="858" y="74" width="2" height="2"/><rect x="858" y="78" width="2" height="2"/><rect x="861" y="70" width="9" height="2"/><rect x="861" y="74" width="9" height="2"/><rect x="861" y="78" width="9" height="2"/></g>
 <rect x="856.5" y="96.5" width="15" height="10" fill="#fff" stroke="#707070" stroke-width="1"/>
 <circle cx="861" cy="100" r="1.5" fill="#3f7ec0"/><path d="M858,105 L858,103.5 L860,102.3 L862,102.3 L864,103.5 L864,105 Z" fill="#3f7ec0"/>
 <g fill="#8a8a8a"><rect x="865.3" y="98" width="5" height="0.9"/><rect x="865.3" y="100" width="5" height="0.9"/><rect x="865.3" y="102" width="5" height="0.9"/><rect x="865.3" y="104" width="5" height="0.9"/></g>
 <path d="M864,134 L859.5,127.5 A5.3,5.3 0 1 1 868.5,127.5 Z" fill="#e8400f"/>
 <circle cx="864" cy="124.3" r="2.6" fill="#f0f0f0"/>
 <!-- Find funnel -->
 <path d="M936,71 L960,71 L960,72.5 L951,82.5 L948.5,95 L946.5,95 L944.5,82.5 L936,72.5 Z" fill="#707070"/>
 <!-- Getting started -->
 <circle cx="1006" cy="83" r="14" fill="#66a38a"/>
 <path d="M1002,76.5 L1012,83 L1002,89.5 Z" fill="#f0f0f0"/>
 <!-- support -->
 <rect x="1041" y="68.5" width="14" height="11.5" rx="1.5" fill="#4a7eb8"/>
 <path d="M1043.5,79.5 L1044.5,83 L1047,79.5 Z" fill="#4a7eb8"/>
 <text x="1048" y="77.8" font-family="Liberation Sans" font-size="8.5" font-weight="bold" fill="#fff" text-anchor="middle">?</text>
 <!-- cart -->
 <path d="M1041,94.5 L1043,97" stroke="#e8400f" stroke-width="1"/>
 <path d="M1043,96.8 L1055,96.8 L1053,103 L1044,103 Z" fill="#e8400f"/>
 <rect x="1044.5" y="100.5" width="8" height="1" fill="#e4e4e4"/>
 <circle cx="1044.5" cy="105.5" r="1.3" fill="#777"/><circle cx="1050.5" cy="105.5" r="1.3" fill="#777"/>
 <!-- info -->
 <circle cx="1048" cy="127" r="7" fill="#4a7eb8"/>
 <rect x="1047" y="122" width="2" height="2" fill="#fff"/><rect x="1047" y="125" width="2" height="6" fill="#fff"/>
 <!-- collapse -->
 <path d="M1232.8,149.8 L1237,145.3 L1241.2,149.8 L1239.6,149.8 L1237,147.3 L1234.4,149.8 Z" fill="#444"/>
</svg>

</body></html>
